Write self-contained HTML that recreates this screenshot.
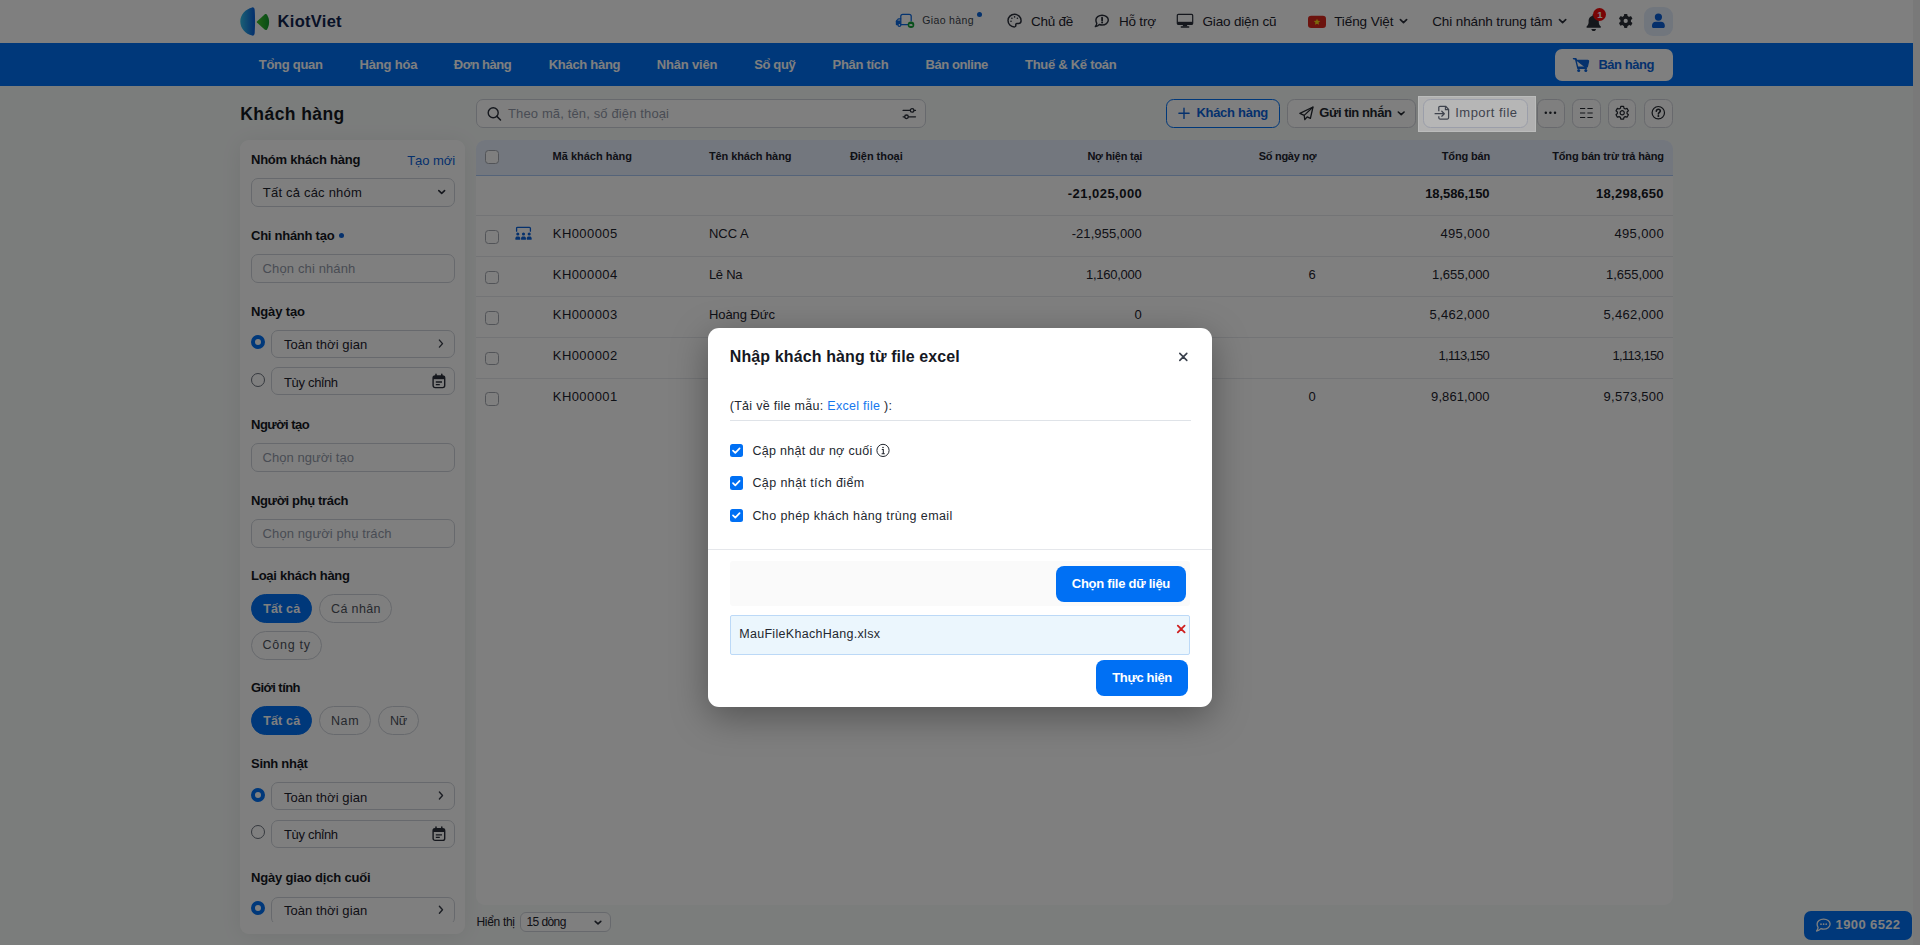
<!DOCTYPE html>
<html lang="vi"><head><meta charset="utf-8"><title>Khách hàng - KiotViet</title>
<style>

*{box-sizing:border-box}
html,body{margin:0;padding:0}
body{width:1920px;height:945px;overflow:hidden;position:relative;background:#f7faf9;font-family:"Liberation Sans",sans-serif;color:#1d222d;font-size:13px}
.t{position:absolute;white-space:pre;display:block}
.a{position:absolute}
.box{position:absolute;border:1px solid #cfd3da;border-radius:7px;background:#fff}
svg{position:absolute;overflow:visible}
.cb{position:absolute;width:13.5px;height:13.5px;border:1px solid #a4a8b0;border-radius:3.5px;background:#fff}
.row{position:absolute;left:476px;width:1197px;height:1px;background:#e6e8ec}
.pill{position:absolute;height:29px;border-radius:15px;border:1px solid #cfd3da;background:#fff}
.pill.on{background:#0070f4;border-color:#0070f4}
.radio{position:absolute;width:14.2px;height:14.2px;border-radius:50%;border:1px solid #6b717c;background:#fff}
.radio.on{border:4px solid #0070f4}
.ibtn{position:absolute;top:99px;height:28.5px;border:1px solid #d0d3da;border-radius:7.5px;background:#fff}

</style></head>
<body>
<div class="a" style="left:0px;top:0px;width:1913px;height:43px;background:#fff"></div>
<svg style="left:240px;top:7px;" width="31" height="30" viewBox="0 0 31 30"><g transform="translate(0.000 0.000) scale(1.0000 1.0000)"><defs><linearGradient id="lg1" x1="0" x2="1" y1="0" y2="0"><stop offset="0" stop-color="#35c0ea"/><stop offset="0.9" stop-color="#0c66dc"/></linearGradient><linearGradient id="lg2" x1="0" x2="1" y1="0" y2="0"><stop offset="0" stop-color="#43c52c"/><stop offset="1" stop-color="#0f9a2e"/></linearGradient></defs><path d="M12.2 0.4 C13.6 0.2 14.6 1.2 14.7 3 C15.2 9 15.2 20 14.7 26 C14.6 27.8 13.6 28.8 12.2 28.6 C5.5 27 0.3 21.5 0.3 14.5 C0.3 7.5 5.5 2 12.2 0.4Z" fill="url(#lg1)"/><path d="M16.9 14.6 C16.6 14.9 16.6 15.3 16.9 15.6 L24.6 22.6 C25.5 23.4 26.6 23.2 27.2 22.2 C28.4 20 29.1 17.6 29.1 15 C29.1 12.4 28.4 10 27.2 7.9 C26.6 6.9 25.5 6.7 24.6 7.5Z" fill="url(#lg2)"/></g></svg>
<span class="t" style="top:13px;font-size:16.5px;line-height:16.5px;color:#10244f;font-weight:700;letter-spacing:0.279px;left:277.60px;">KiotViet</span>
<svg style="left:895px;top:13px;" width="21" height="17" viewBox="0 0 21 17"><g transform="translate(0.500 0.000) scale(1.0000 1.0000)"><path d="M5.3 11.9V3.2C5.3 2.1 6.2 1.3 7.3 1.3H13.7C14.8 1.3 15.7 2.1 15.7 3.2V7.8M5.3 11.7H12.2" fill="none" stroke="#0b68e0" stroke-width="1.25" stroke-linecap="round"/><path d="M5.2 5.8H3.2C2.8 5.8 2.5 6 2.3 6.3L0.9 8.2" fill="none" stroke="#0b68e0" stroke-width="1.2" stroke-linecap="round" stroke-linejoin="round"/><path d="M0.3 8.4C0.3 7.9 0.6 7.5 1.1 7.5H5.1V12.3H1.3C0.7 12.3 0.3 11.9 0.3 11.3Z" fill="#0b68e0"/><circle cx="3.9" cy="11.9" r="2" fill="#0b68e0"/><circle cx="3.9" cy="11.9" r="0.8" fill="#fff"/><circle cx="15.5" cy="11.8" r="3.3" fill="#12a037"/><path d="M13.9 10.9h3.3l-0.8 1.1h0.6v0.9h-3.1z" fill="#e8f5ea"/></g></svg>
<span class="t" style="top:15px;font-size:10.5px;line-height:10.5px;color:#3a3f4a;letter-spacing:0.366px;left:922.20px;">Giao hàng</span>
<div class="a" style="left:976.8px;top:12.1px;width:5.4px;height:5.4px;border-radius:50%;background:#0a64d8"></div>
<svg style="left:1007px;top:13px;" width="16" height="16" viewBox="0 0 16 16"><g transform="translate(0.300 0.600) scale(1.0000 1.0000)"><path d="M7.2 0.7C3.6 0.7 0.7 3.5 0.7 7C0.7 10.5 3.5 13.3 7 13.3C8.1 13.3 8.7 12.5 8.5 11.6C8.3 10.8 8.6 9.9 9.6 9.9H11.3C12.8 9.9 13.8 8.8 13.8 7.2C13.8 3.4 10.8 0.7 7.2 0.7Z" fill="none" stroke="#2a2f3a" stroke-width="1.45"/><circle cx="3.7" cy="7.6" r="0.8" fill="#2a2f3a"/><circle cx="4.6" cy="4.6" r="0.8" fill="#2a2f3a"/><circle cx="7.3" cy="3.3" r="0.8" fill="#2a2f3a"/><circle cx="10.1" cy="4.6" r="0.8" fill="#2a2f3a"/></g></svg>
<span class="t" style="top:15px;font-size:13.5px;line-height:13.5px;color:#1d222d;letter-spacing:-0.269px;left:1031.00px;">Chủ đề</span>
<svg style="left:1094px;top:14px;" width="16" height="15" viewBox="0 0 16 15"><g transform="translate(0.500 0.500) scale(1.0000 1.0000)"><path d="M7.6 0.7C11 0.7 13.8 2.9 13.8 5.6C13.8 8.3 11 10.5 7.6 10.5C6.6 10.5 5.7 10.3 4.9 10C4 10.9 2.6 11.7 0.9 12C1.7 11 2.2 9.9 2.3 8.8C1.7 7.9 1.4 6.8 1.4 5.6C1.4 2.9 4.2 0.7 7.6 0.7Z" fill="none" stroke="#2a2f3a" stroke-width="1.45" stroke-linejoin="round"/><path d="M7.6 3.1v2.9" stroke="#2a2f3a" stroke-width="1.8" stroke-linecap="round"/><circle cx="7.6" cy="8.1" r="1" fill="#2a2f3a"/></g></svg>
<span class="t" style="top:15px;font-size:13.5px;line-height:13.5px;color:#1d222d;letter-spacing:-0.182px;left:1118.90px;">Hỗ trợ</span>
<svg style="left:1176px;top:13px;" width="19" height="16" viewBox="0 0 19 16"><g transform="translate(0.700 0.800) scale(1.0000 1.0000)"><rect x="0.6" y="0.6" width="15.4" height="9.9" rx="1" fill="none" stroke="#2a2f3a" stroke-width="1.2"/><rect x="0.7" y="8" width="15.2" height="2.5" fill="#2a2f3a"/><path d="M6.6 10.5h3.4l0.8 2.2H5.8z" fill="#2a2f3a"/><rect x="3.9" y="12.5" width="8.8" height="1.4" rx="0.6" fill="#2a2f3a"/></g></svg>
<span class="t" style="top:15px;font-size:13.5px;line-height:13.5px;color:#1d222d;letter-spacing:-0.165px;left:1202.50px;">Giao diện cũ</span>
<svg style="left:1308px;top:15px;" width="19" height="14" viewBox="0 0 19 14"><g transform="translate(0.000 0.800) scale(1.0000 1.0000)"><rect width="18" height="12.2" rx="3.2" fill="#d8261c"/><path d="M9 2.9l0.95 2.1 2.3 0.25-1.7 1.55 0.45 2.25L9 7.9 6.95 9.05l0.5-2.25L5.75 5.25l2.3-0.25z" fill="#f7d417"/></g></svg>
<span class="t" style="top:15px;font-size:13.5px;line-height:13.5px;color:#1d222d;letter-spacing:-0.083px;left:1334.20px;">Tiếng Việt</span>
<svg style="left:1400px;top:19px;" width="8" height="6" viewBox="0 0 8 6"><g transform="translate(0.000 0.300) scale(1.0000 1.0000)"><path d="M0.4 0.4 L3.5 3.3 L6.6 0.4" fill="none" stroke="#2a2f3a" stroke-width="1.7" stroke-linecap="round" stroke-linejoin="round"/></g></svg>
<span class="t" style="top:15px;font-size:13.5px;line-height:13.5px;color:#1d222d;letter-spacing:-0.113px;left:1432.20px;">Chi nhánh trung tâm</span>
<svg style="left:1559px;top:19px;" width="9" height="6" viewBox="0 0 9 6"><g transform="translate(0.100 0.300) scale(1.0000 1.0000)"><path d="M0.4 0.4 L3.5 3.3 L6.6 0.4" fill="none" stroke="#2a2f3a" stroke-width="1.7" stroke-linecap="round" stroke-linejoin="round"/></g></svg>
<svg style="left:1586px;top:13px;" width="17" height="19" viewBox="0 0 17 19"><g transform="translate(0.000 0.600) scale(1.0000 1.0000)"><path d="M7.7 0.5C8.4 0.5 8.9 1 8.9 1.7V2.1C11.2 2.6 12.8 4.6 12.8 7V8.6C12.8 10.4 13.5 11.6 14.6 12.6C15.2 13.2 14.9 14.2 14 14.2H1.4C0.5 14.2 0.2 13.2 0.8 12.6C1.9 11.6 2.6 10.4 2.6 8.6V7C2.6 4.6 4.2 2.6 6.5 2.1V1.7C6.5 1 7 0.5 7.7 0.5Z" fill="#2a2e36"/><path d="M5.4 15.3h4.6c0 1.2-1 2.1-2.3 2.1s-2.3-0.9-2.3-2.1z" fill="#2a2e36"/></g></svg>
<div class="a" style="left:1592.9px;top:8.3px;width:13.2px;height:13.2px;border-radius:50%;background:#f30a0a"></div>
<span class="t" style="top:10px;font-size:9.5px;line-height:9.5px;color:#fff;font-weight:700;left:1597.20px;">1</span>
<svg style="left:1618px;top:13px;" width="16" height="16" viewBox="0 0 16 16"><g transform="translate(7.700 7.900) scale(1.0000 1.0000)"><g fill="#2a2e36"><rect x="-1.75" y="-7" width="3.5" height="4" rx="0.8" transform="rotate(0)"/><rect x="-1.75" y="-7" width="3.5" height="4" rx="0.8" transform="rotate(60)"/><rect x="-1.75" y="-7" width="3.5" height="4" rx="0.8" transform="rotate(120)"/><rect x="-1.75" y="-7" width="3.5" height="4" rx="0.8" transform="rotate(180)"/><rect x="-1.75" y="-7" width="3.5" height="4" rx="0.8" transform="rotate(240)"/><rect x="-1.75" y="-7" width="3.5" height="4" rx="0.8" transform="rotate(300)"/><circle r="5.3"/></g><circle r="2.1" fill="#fff"/></g></svg>
<div class="a" style="left:1644px;top:6.8px;width:28.8px;height:28.8px;border-radius:9px;background:#e3ecfb"></div>
<svg style="left:1651px;top:13px;" width="15" height="16" viewBox="0 0 15 16"><g transform="translate(0.800 0.400) scale(1.0000 1.0000)"><circle cx="6.6" cy="3.7" r="3.6" fill="#0a5fd6"/><path d="M0.2 12.2C0.2 9.8 1.8 8.4 4 8.4H9.2C11.4 8.4 13 9.8 13 12.2V13C13 13.9 12.4 14.5 11.5 14.5H1.7C0.8 14.5 0.2 13.9 0.2 13Z" fill="#0a5fd6"/></g></svg>
<div class="a" style="left:0px;top:43px;width:1913px;height:43px;background:#0070f4"></div>
<span class="t" style="top:58px;font-size:13px;line-height:13px;color:#fff;font-weight:700;letter-spacing:-0.273px;left:258.75px;">Tổng quan</span>
<span class="t" style="top:58px;font-size:13px;line-height:13px;color:#fff;font-weight:700;letter-spacing:-0.176px;left:359.50px;">Hàng hóa</span>
<span class="t" style="top:58px;font-size:13px;line-height:13px;color:#fff;font-weight:700;letter-spacing:-0.464px;left:453.75px;">Đơn hàng</span>
<span class="t" style="top:58px;font-size:13px;line-height:13px;color:#fff;font-weight:700;letter-spacing:-0.295px;left:548.75px;">Khách hàng</span>
<span class="t" style="top:58px;font-size:13px;line-height:13px;color:#fff;font-weight:700;letter-spacing:-0.172px;left:656.75px;">Nhân viên</span>
<span class="t" style="top:58px;font-size:13px;line-height:13px;color:#fff;font-weight:700;letter-spacing:-0.369px;left:754.25px;">Sổ quỹ</span>
<span class="t" style="top:58px;font-size:13px;line-height:13px;color:#fff;font-weight:700;letter-spacing:-0.283px;left:832.50px;">Phân tích</span>
<span class="t" style="top:58px;font-size:13px;line-height:13px;color:#fff;font-weight:700;letter-spacing:-0.411px;left:925.50px;">Bán online</span>
<span class="t" style="top:58px;font-size:13px;line-height:13px;color:#fff;font-weight:700;letter-spacing:-0.276px;left:1025.00px;">Thuế &amp; Kế toán</span>
<div class="a" style="left:1555px;top:49px;width:118px;height:32px;border-radius:7px;background:#fff"></div>
<svg style="left:1572px;top:57px;" width="18" height="16" viewBox="0 0 18 16"><g transform="translate(0.800 0.800) scale(1.0000 1.0000)"><path d="M0.7 0.8H2.6C3 0.8 3.3 1 3.4 1.4L3.7 2.6H15C15.5 2.6 15.8 3 15.7 3.5L14.6 8.6C14.5 9.1 14.1 9.4 13.6 9.4H5.2L5.5 10.6H13.6" fill="#0a62da" stroke="#0a62da" stroke-width="1.3" stroke-linejoin="round" stroke-linecap="round"/><path d="M0.7 0.8H2.7L5 10.4" fill="none" stroke="#0a62da" stroke-width="1.4" stroke-linecap="round" stroke-linejoin="round"/><circle cx="5.9" cy="12.6" r="1.5" fill="#0a62da"/><circle cx="13" cy="12.6" r="1.5" fill="#0a62da"/></g></svg>
<span class="t" style="top:58px;font-size:13px;line-height:13px;color:#0a62da;font-weight:700;letter-spacing:-0.462px;left:1598.40px;">Bán hàng</span>
<span class="t" style="top:106px;font-size:17.5px;line-height:17.5px;color:#15181f;font-weight:700;letter-spacing:0.427px;left:240.30px;">Khách hàng</span>
<div class="box" style="left:476px;top:99px;width:450px;height:28.5px;"></div>
<svg style="left:487px;top:106px;" width="16" height="16" viewBox="0 0 16 16"><g transform="translate(0.300 0.800) scale(1.0000 1.0000)"><circle cx="5.9" cy="5.9" r="5" fill="none" stroke="#2a2f3a" stroke-width="1.4"/><path d="M9.6 9.6L13.2 13.2" stroke="#2a2f3a" stroke-width="1.5" stroke-linecap="round"/></g></svg>
<span class="t" style="top:107px;font-size:13px;line-height:13px;color:#9299a8;letter-spacing:0.133px;left:508.00px;">Theo mã, tên, số điện thoại</span>
<svg style="left:902px;top:107px;" width="16" height="14" viewBox="0 0 16 14"><g transform="translate(0.500 0.300) scale(1.0000 1.0000)"><path d="M0.6 3.1H13M0.6 9.5H13" stroke="#2a2f3a" stroke-width="1.3" stroke-linecap="round"/><circle cx="9.6" cy="3.1" r="1.8" fill="#fff" stroke="#2a2f3a" stroke-width="1.3"/><circle cx="4" cy="9.5" r="1.8" fill="#fff" stroke="#2a2f3a" stroke-width="1.3"/></g></svg>
<div class="a" style="left:1166px;top:99px;width:114px;height:28.5px;border:1px solid #0070f4;border-radius:7.5px;background:#fff"></div>
<svg style="left:1178px;top:107px;" width="13" height="13" viewBox="0 0 13 13"><g transform="translate(0.300 0.600) scale(1.0000 1.0000)"><path d="M5.7 0.6V10.8M0.6 5.7H10.8" stroke="#0a62da" stroke-width="1.4" stroke-linecap="round"/></g></svg>
<span class="t" style="top:106px;font-size:13px;line-height:13px;color:#0a62da;font-weight:700;letter-spacing:-0.278px;left:1196.40px;">Khách hàng</span>
<div class="ibtn" style="left:1287.2px;top:99px;width:128.4px;height:28.5px;"></div>
<svg style="left:1299px;top:106px;" width="16" height="16" viewBox="0 0 16 16"><g transform="translate(0.000 0.200) scale(1.0000 1.0000)"><path d="M14 0.8L0.9 7.2L5.2 9.2L5.8 13.4L8.2 10.6L11.4 12.2Z" fill="none" stroke="#23272f" stroke-width="1.3" stroke-linejoin="round"/><path d="M14 0.8L5.2 9.2" stroke="#23272f" stroke-width="1.2"/></g></svg>
<span class="t" style="top:106px;font-size:13px;line-height:13px;color:#23272f;font-weight:700;letter-spacing:-0.418px;left:1319.20px;">Gửi tin nhắn</span>
<svg style="left:1397px;top:111px;" width="9" height="6" viewBox="0 0 9 6"><g transform="translate(0.900 0.600) scale(1.0000 1.0000)"><path d="M0.4 0.4 L3.3 3.1 L6.199999999999999 0.4" fill="none" stroke="#23272f" stroke-width="1.6" stroke-linecap="round" stroke-linejoin="round"/></g></svg>
<div class="ibtn" style="left:1536.5px;top:99px;width:28px;height:28.5px;"></div>
<div class="ibtn" style="left:1572.3px;top:99px;width:28.3px;height:28.5px;"></div>
<div class="ibtn" style="left:1608.4px;top:99px;width:28px;height:28.5px;"></div>
<div class="ibtn" style="left:1644.3px;top:99px;width:28.3px;height:28.5px;"></div>
<svg style="left:1544px;top:111px;" width="14" height="5" viewBox="0 0 14 5"><g transform="translate(0.400 0.200) scale(1.0000 1.0000)"><circle cx="1.4" cy="1.5" r="1.25" fill="#23272f"/><circle cx="6" cy="1.5" r="1.25" fill="#23272f"/><circle cx="10.6" cy="1.5" r="1.25" fill="#23272f"/></g></svg>
<svg style="left:1580px;top:107px;" width="14" height="13" viewBox="0 0 14 13"><g transform="translate(0.000 0.500) scale(1.0000 1.0000)"><path d="M0 1H5.2M7.4 1H12.7M0 5.5H5.2M7.4 5.5H12.7M0 10H5.2M7.4 10H12.7" stroke="#23272f" stroke-width="1.1"/></g></svg>
<svg style="left:1615px;top:105px;" width="16" height="16" viewBox="0 0 16 16"><g transform="translate(7.200 7.800) scale(1.0000 1.0000)"><path d="M-1.76 -4.57 L-1.41 -6.35 L1.41 -6.35 L1.76 -4.57 L3.08 -3.81 L4.79 -4.39 L6.20 -1.95 L4.84 -0.77 L4.84 0.77 L6.20 1.95 L4.79 4.39 L3.08 3.81 L1.76 4.57 L1.41 6.35 L-1.41 6.35 L-1.76 4.57 L-3.08 3.81 L-4.79 4.39 L-6.20 1.95 L-4.84 0.77 L-4.84 -0.77 L-6.20 -1.95 L-4.79 -4.39 L-3.08 -3.81Z" fill="none" stroke="#23272f" stroke-width="1.2" stroke-linejoin="round"/><circle r="2.1" fill="none" stroke="#23272f" stroke-width="1.2"/></g></svg>
<svg style="left:1651px;top:106px;" width="15" height="15" viewBox="0 0 15 15"><g transform="translate(0.600 0.000) scale(1.0000 1.0000)"><circle cx="6.7" cy="6.7" r="6.2" fill="none" stroke="#23272f" stroke-width="1.2"/><path d="M4.7 5.2C4.7 4 5.6 3.3 6.7 3.3C7.8 3.3 8.7 4 8.7 5.1C8.7 6.4 6.9 6.5 6.8 8" fill="none" stroke="#23272f" stroke-width="1.6" stroke-linecap="round"/><circle cx="6.8" cy="10.1" r="1" fill="#23272f"/></g></svg>
<div class="a" style="left:240px;top:140px;width:225px;height:794px;border-radius:9px;box-shadow:0 2px 22px rgba(0,0,0,.07)"></div><div class="a" style="left:240px;top:140px;width:225px;height:794px;background:#fff;border-radius:9px;overflow:hidden"><div class="a" style="left:-240px;top:-140px;width:1920px;height:922.3px;overflow:hidden">
<span class="t" style="top:153px;font-size:13px;line-height:13px;color:#15181f;font-weight:700;letter-spacing:-0.228px;left:251.00px;">Nhóm khách hàng</span>
<span class="t" style="top:154px;font-size:13px;line-height:13px;color:#0a62da;letter-spacing:-0.044px;left:407.20px;">Tạo mới</span>
<div class="box" style="left:251px;top:178.4px;width:204px;height:28.2px;"></div>
<span class="t" style="top:186px;font-size:13px;line-height:13px;color:#1d222d;letter-spacing:0.206px;left:262.80px;">Tất cả các nhóm</span>
<svg style="left:438px;top:190px;" width="8" height="5" viewBox="0 0 8 5"><g transform="translate(0.400 0.200) scale(1.0000 1.0000)"><path d="M0.4 0.4 L3.3 3.1 L6.199999999999999 0.4" fill="none" stroke="#2a2f3a" stroke-width="1.6" stroke-linecap="round" stroke-linejoin="round"/></g></svg>
<span class="t" style="top:229px;font-size:13px;line-height:13px;color:#15181f;font-weight:700;letter-spacing:-0.256px;left:251.00px;">Chi nhánh tạo</span>
<div class="a" style="left:338.8px;top:233.1px;width:5.2px;height:5.2px;border-radius:50%;background:#0a62da"></div>
<div class="box" style="left:251px;top:254.4px;width:204px;height:28.2px;"></div>
<span class="t" style="top:262px;font-size:13px;line-height:13px;color:#9299a8;letter-spacing:0.125px;left:262.60px;">Chọn chi nhánh</span>
<span class="t" style="top:305px;font-size:13px;line-height:13px;color:#15181f;font-weight:700;letter-spacing:-0.129px;left:251.00px;">Ngày tạo</span>
<div class="radio on" style="left:250.9px;top:334.9px"></div>
<div class="box" style="left:271.4px;top:330.4px;width:183.6px;height:28.1px;"></div>
<span class="t" style="top:338px;font-size:13px;line-height:13px;color:#1d222d;letter-spacing:0.081px;left:283.90px;">Toàn thời gian</span>
<svg style="left:438px;top:339px;" width="7" height="10" viewBox="0 0 7 10"><g transform="translate(0.900 0.600) scale(1.0000 1.0000)"><path d="M0.5 0.5 L3.6 4.0 L0.5 7.5" fill="none" stroke="#3a3f4a" stroke-width="1.4" stroke-linecap="round" stroke-linejoin="round"/></g></svg>
<div class="radio" style="left:250.9px;top:372.9px"></div>
<div class="box" style="left:271.4px;top:367.4px;width:183.6px;height:28.1px;"></div>
<span class="t" style="top:376px;font-size:13px;line-height:13px;color:#1d222d;letter-spacing:-0.272px;left:283.90px;">Tùy chỉnh</span>
<svg style="left:432px;top:373px;" width="15" height="17" viewBox="0 0 15 17"><g transform="translate(0.400 0.800) scale(1.0000 1.0000)"><rect x="0.7" y="2.2" width="11.6" height="11.6" rx="2" fill="none" stroke="#2a2f3a" stroke-width="1.4"/><rect x="0.7" y="2.2" width="11.6" height="3.2" fill="#2a2f3a"/><path d="M3.6 0.5v3M9.4 0.5v3" stroke="#2a2f3a" stroke-width="1.5" stroke-linecap="round"/><path d="M3.4 8.2h6.2M3.4 10.8h4" stroke="#2a2f3a" stroke-width="1.3"/></g></svg>
<span class="t" style="top:418px;font-size:13px;line-height:13px;color:#15181f;font-weight:700;letter-spacing:-0.502px;left:251.00px;">Người tạo</span>
<div class="box" style="left:251px;top:443.4px;width:204px;height:28.2px;"></div>
<span class="t" style="top:451px;font-size:13px;line-height:13px;color:#9299a8;letter-spacing:0.027px;left:262.60px;">Chọn người tạo</span>
<span class="t" style="top:494px;font-size:13px;line-height:13px;color:#15181f;font-weight:700;letter-spacing:-0.353px;left:251.00px;">Người phụ trách</span>
<div class="box" style="left:251px;top:519.4px;width:204px;height:28.2px;"></div>
<span class="t" style="top:527px;font-size:13px;line-height:13px;color:#9299a8;letter-spacing:0.095px;left:262.60px;">Chọn người phụ trách</span>
<span class="t" style="top:569px;font-size:13px;line-height:13px;color:#15181f;font-weight:700;letter-spacing:-0.256px;left:251.00px;">Loại khách hàng</span>
<div class="pill on" style="left:250.7px;top:594.2px;width:61.3px"></div>
<span class="t" style="top:603px;font-size:12.5px;line-height:12.5px;color:#fff;font-weight:700;letter-spacing:0.172px;left:263.20px;">Tất cả</span>
<div class="pill" style="left:319.2px;top:594.2px;width:72.6px"></div>
<span class="t" style="top:603px;font-size:12.5px;line-height:12.5px;color:#4d525c;letter-spacing:0.372px;left:331.00px;">Cá nhân</span>
<div class="pill" style="left:250.7px;top:631.2px;width:71.2px"></div>
<span class="t" style="top:639px;font-size:12.5px;line-height:12.5px;color:#4d525c;letter-spacing:0.718px;left:262.60px;">Công ty</span>
<span class="t" style="top:681px;font-size:13px;line-height:13px;color:#15181f;font-weight:700;letter-spacing:-0.564px;left:251.00px;">Giới tính</span>
<div class="pill on" style="left:250.7px;top:706.2px;width:61.3px"></div>
<span class="t" style="top:715px;font-size:12.5px;line-height:12.5px;color:#fff;font-weight:700;letter-spacing:0.172px;left:263.20px;">Tất cả</span>
<div class="pill" style="left:319.2px;top:706.2px;width:51.8px"></div>
<span class="t" style="top:715px;font-size:12.5px;line-height:12.5px;color:#4d525c;letter-spacing:0.597px;left:331.00px;">Nam</span>
<div class="pill" style="left:378.1px;top:706.2px;width:40.6px"></div>
<span class="t" style="top:715px;font-size:12.5px;line-height:12.5px;color:#4d525c;letter-spacing:-0.206px;left:390.00px;">Nữ</span>
<span class="t" style="top:757px;font-size:13px;line-height:13px;color:#15181f;font-weight:700;letter-spacing:-0.290px;left:251.00px;">Sinh nhật</span>
<div class="radio on" style="left:250.9px;top:788.3px"></div>
<div class="box" style="left:271.4px;top:782.3px;width:183.6px;height:28.1px;"></div>
<span class="t" style="top:791px;font-size:13px;line-height:13px;color:#1d222d;letter-spacing:0.081px;left:283.90px;">Toàn thời gian</span>
<svg style="left:438px;top:791px;" width="7" height="10" viewBox="0 0 7 10"><g transform="translate(0.900 0.500) scale(1.0000 1.0000)"><path d="M0.5 0.5 L3.6 4.0 L0.5 7.5" fill="none" stroke="#3a3f4a" stroke-width="1.4" stroke-linecap="round" stroke-linejoin="round"/></g></svg>
<div class="radio" style="left:250.9px;top:825.3px"></div>
<div class="box" style="left:271.4px;top:820.2px;width:183.6px;height:28.1px;"></div>
<span class="t" style="top:828px;font-size:13px;line-height:13px;color:#1d222d;letter-spacing:-0.272px;left:283.90px;">Tùy chỉnh</span>
<svg style="left:432px;top:826px;" width="15" height="17" viewBox="0 0 15 17"><g transform="translate(0.400 0.600) scale(1.0000 1.0000)"><rect x="0.7" y="2.2" width="11.6" height="11.6" rx="2" fill="none" stroke="#2a2f3a" stroke-width="1.4"/><rect x="0.7" y="2.2" width="11.6" height="3.2" fill="#2a2f3a"/><path d="M3.6 0.5v3M9.4 0.5v3" stroke="#2a2f3a" stroke-width="1.5" stroke-linecap="round"/><path d="M3.4 8.2h6.2M3.4 10.8h4" stroke="#2a2f3a" stroke-width="1.3"/></g></svg>
<span class="t" style="top:871px;font-size:13px;line-height:13px;color:#15181f;font-weight:700;letter-spacing:-0.172px;left:251.00px;">Ngày giao dịch cuối</span>
<div class="radio on" style="left:250.9px;top:901.1px"></div>
<div class="box" style="left:271.4px;top:896.6px;width:183.6px;height:28.1px;"></div>
<span class="t" style="top:904px;font-size:13px;line-height:13px;color:#1d222d;letter-spacing:0.081px;left:283.90px;">Toàn thời gian</span>
<svg style="left:438px;top:905px;" width="7" height="10" viewBox="0 0 7 10"><g transform="translate(0.900 0.800) scale(1.0000 1.0000)"><path d="M0.5 0.5 L3.6 4.0 L0.5 7.5" fill="none" stroke="#3a3f4a" stroke-width="1.4" stroke-linecap="round" stroke-linejoin="round"/></g></svg>
</div></div>
<div class="a" style="left:476px;top:140px;width:1197px;height:765px;background:#fff;border-radius:9px"></div>
<div class="a" style="left:476px;top:140px;width:1197px;height:36px;background:#e6effd;border-radius:9px 9px 0 0;border-bottom:1px solid #a9c6f3"></div>
<div class="cb" style="left:485px;top:150.2px"></div>
<span class="t" style="top:151px;font-size:11px;line-height:11px;color:#1d222d;font-weight:700;letter-spacing:-0.006px;left:552.60px;">Mã khách hàng</span>
<span class="t" style="top:151px;font-size:11px;line-height:11px;color:#1d222d;font-weight:700;letter-spacing:-0.088px;left:708.90px;">Tên khách hàng</span>
<span class="t" style="top:151px;font-size:11px;line-height:11px;color:#1d222d;font-weight:700;letter-spacing:-0.041px;left:849.90px;">Điện thoại</span>
<span class="t" style="top:151px;font-size:11px;line-height:11px;color:#1d222d;font-weight:700;letter-spacing:-0.233px;right:777.83px;">Nợ hiện tại</span>
<span class="t" style="top:151px;font-size:11px;line-height:11px;color:#1d222d;font-weight:700;letter-spacing:-0.288px;right:603.79px;">Số ngày nợ</span>
<span class="t" style="top:151px;font-size:11px;line-height:11px;color:#1d222d;font-weight:700;letter-spacing:-0.129px;right:429.83px;">Tổng bán</span>
<span class="t" style="top:151px;font-size:11px;line-height:11px;color:#1d222d;font-weight:700;letter-spacing:-0.155px;right:256.16px;">Tổng bán trừ trả hàng</span>
<span class="t" style="top:187px;font-size:13px;line-height:13px;color:#15181f;font-weight:700;letter-spacing:0.459px;right:777.74px;">-21,025,000</span>
<span class="t" style="top:187px;font-size:13px;line-height:13px;color:#15181f;font-weight:700;letter-spacing:-0.075px;right:430.48px;">18,586,150</span>
<span class="t" style="top:187px;font-size:13px;line-height:13px;color:#15181f;font-weight:700;letter-spacing:0.269px;right:256.13px;">18,298,650</span>
<div class="row" style="top:215.4px"></div>
<div class="row" style="top:256.4px"></div>
<div class="row" style="top:296.3px"></div>
<div class="row" style="top:337px"></div>
<div class="row" style="top:378.1px"></div>
<div class="cb" style="left:485px;top:230.2px"></div>
<span class="t" style="top:227px;font-size:13px;line-height:13px;color:#1d222d;letter-spacing:0.421px;left:552.80px;">KH000005</span>
<span class="t" style="top:227px;font-size:13px;line-height:13px;color:#1d222d;letter-spacing:-0.009px;left:708.90px;">NCC A</span>
<span class="t" style="top:227px;font-size:13px;line-height:13px;color:#1d222d;letter-spacing:0.079px;right:778.12px;">-21,955,000</span>
<span class="t" style="top:227px;font-size:13px;line-height:13px;color:#1d222d;letter-spacing:0.367px;right:430.03px;">495,000</span>
<span class="t" style="top:227px;font-size:13px;line-height:13px;color:#1d222d;letter-spacing:0.367px;right:256.03px;">495,000</span>
<div class="cb" style="left:485px;top:270.6px"></div>
<span class="t" style="top:268px;font-size:13px;line-height:13px;color:#1d222d;letter-spacing:0.421px;left:552.80px;">KH000004</span>
<span class="t" style="top:268px;font-size:13px;line-height:13px;color:#1d222d;letter-spacing:-0.251px;left:708.90px;">Lê Na</span>
<span class="t" style="top:268px;font-size:13px;line-height:13px;color:#1d222d;letter-spacing:-0.243px;right:778.44px;">1,160,000</span>
<span class="t" style="top:268px;font-size:13px;line-height:13px;color:#1d222d;right:604.40px;">6</span>
<span class="t" style="top:268px;font-size:13px;line-height:13px;color:#1d222d;letter-spacing:-0.043px;right:430.44px;">1,655,000</span>
<span class="t" style="top:268px;font-size:13px;line-height:13px;color:#1d222d;letter-spacing:-0.043px;right:256.44px;">1,655,000</span>
<div class="cb" style="left:485px;top:311.3px"></div>
<span class="t" style="top:308px;font-size:13px;line-height:13px;color:#1d222d;letter-spacing:0.421px;left:552.80px;">KH000003</span>
<span class="t" style="top:308px;font-size:13px;line-height:13px;color:#1d222d;letter-spacing:-0.064px;left:708.90px;">Hoàng Đức</span>
<span class="t" style="top:308px;font-size:13px;line-height:13px;color:#1d222d;right:778.20px;">0</span>
<span class="t" style="top:308px;font-size:13px;line-height:13px;color:#1d222d;letter-spacing:0.270px;right:430.13px;">5,462,000</span>
<span class="t" style="top:308px;font-size:13px;line-height:13px;color:#1d222d;letter-spacing:0.270px;right:256.13px;">5,462,000</span>
<div class="cb" style="left:485px;top:351.7px"></div>
<span class="t" style="top:349px;font-size:13px;line-height:13px;color:#1d222d;letter-spacing:0.421px;left:552.80px;">KH000002</span>
<span class="t" style="top:349px;font-size:13px;line-height:13px;color:#1d222d;letter-spacing:-0.734px;right:431.13px;">1,113,150</span>
<span class="t" style="top:349px;font-size:13px;line-height:13px;color:#1d222d;letter-spacing:-0.734px;right:257.13px;">1,113,150</span>
<div class="cb" style="left:485px;top:392.3px"></div>
<span class="t" style="top:390px;font-size:13px;line-height:13px;color:#1d222d;letter-spacing:0.421px;left:552.80px;">KH000001</span>
<span class="t" style="top:390px;font-size:13px;line-height:13px;color:#1d222d;right:604.40px;">0</span>
<span class="t" style="top:390px;font-size:13px;line-height:13px;color:#1d222d;letter-spacing:0.082px;right:430.32px;">9,861,000</span>
<span class="t" style="top:390px;font-size:13px;line-height:13px;color:#1d222d;letter-spacing:0.270px;right:256.13px;">9,573,500</span>
<svg style="left:515px;top:226px;" width="18" height="15" viewBox="0 0 18 15"><g transform="translate(0.000 0.600) scale(1.0000 1.0000)"><path d="M1.6 4.6V1.6C1.6 1 2 0.7 2.6 0.7H14.4C15 0.7 15.4 1 15.4 1.6V4.6" fill="none" stroke="#0a62da" stroke-width="1.3" stroke-linecap="round"/><circle cx="2.8" cy="7.4" r="1.55" fill="#0a62da"/><path d="M0.3999999999999999 13.2V11.6C0.3999999999999999 10.4 1.1999999999999997 9.8 2.1999999999999997 9.8H3.4C4.4 9.8 5.199999999999999 10.4 5.199999999999999 11.6V13.2Z" fill="#0a62da"/><circle cx="8.5" cy="7.4" r="1.55" fill="#0a62da"/><path d="M6.1 13.2V11.6C6.1 10.4 6.9 9.8 7.9 9.8H9.1C10.1 9.8 10.9 10.4 10.9 11.6V13.2Z" fill="#0a62da"/><circle cx="14.2" cy="7.4" r="1.55" fill="#0a62da"/><path d="M11.799999999999999 13.2V11.6C11.799999999999999 10.4 12.6 9.8 13.6 9.8H14.799999999999999C15.799999999999999 9.8 16.599999999999998 10.4 16.599999999999998 11.6V13.2Z" fill="#0a62da"/></g></svg>
<span class="t" style="top:916px;font-size:12px;line-height:12px;color:#1d222d;letter-spacing:-0.312px;left:476.50px;">Hiển thị</span>
<div class="box" style="left:520.4px;top:912.4px;width:90.4px;height:20px;border-radius:6px"></div>
<span class="t" style="top:916px;font-size:12px;line-height:12px;color:#1d222d;letter-spacing:-0.565px;left:526.40px;">15 dòng</span>
<svg style="left:594px;top:920px;" width="9" height="6" viewBox="0 0 9 6"><g transform="translate(0.800 0.900) scale(1.0000 1.0000)"><path d="M0.4 0.4 L3.2 2.9 L6.0 0.4" fill="none" stroke="#2a2f3a" stroke-width="1.6" stroke-linecap="round" stroke-linejoin="round"/></g></svg>
<div class="a" style="left:1804px;top:911px;width:108.4px;height:29px;border-radius:7px;background:#0070f4"></div>
<svg style="left:1815px;top:918px;" width="17" height="15" viewBox="0 0 17 15"><g transform="translate(0.800 0.400) scale(1.0000 1.0000)"><path d="M7.8 0.7C11.4 0.7 14.3 2.9 14.3 5.7C14.3 8.5 11.4 10.7 7.8 10.7C6.8 10.7 5.9 10.5 5.1 10.2C4.1 11.2 2.6 12.3 0.8 12.6C1.7 11.5 2.2 10.3 2.3 9.1C1.7 8.1 1.3 7 1.3 5.7C1.3 2.9 4.2 0.7 7.8 0.7Z" fill="none" stroke="#fff" stroke-width="1.3" stroke-linejoin="round"/><circle cx="5.2" cy="5.8" r="0.85" fill="#fff"/><circle cx="7.8" cy="5.8" r="0.85" fill="#fff"/><circle cx="10.4" cy="5.8" r="0.85" fill="#fff"/></g></svg>
<span class="t" style="top:918px;font-size:13px;line-height:13px;color:#fff;font-weight:700;letter-spacing:0.381px;left:1835.60px;">1900 6522</span>
<div class="a" style="left:1913px;top:0px;width:7px;height:945px;background:#f3f3f3"></div>
<div class="a" style="left:0px;top:0px;width:1920px;height:945px;background:rgba(0,0,0,.5);z-index:10"></div>
<div class="a" style="left:1418px;top:96.2px;width:118px;height:35.8px;background:#b1b1b1;border:1px solid #bbbcbb;z-index:11"></div>
<div class="a" style="left:0;top:0;z-index:12">
<div class="a" style="left:1423.3px;top:99.1px;width:105px;height:28.5px;border:1px solid #9b9ea9;border-radius:7.5px;background:#b6b6b6"></div>
<svg style="left:1434px;top:105px;" width="17" height="16" viewBox="0 0 17 16"><g transform="translate(0.600 0.600) scale(1.0000 1.0000)"><path d="M4.2 5.6V1.9C4.2 1.2 4.7 0.7 5.4 0.7H11L14 3.8V12.2C14 12.9 13.5 13.4 12.8 13.4H5.4C4.7 13.4 4.2 12.9 4.2 12.2V10.6" fill="none" stroke="#3f434d" stroke-width="1.25" stroke-linejoin="round"/><path d="M10.8 0.9V4H13.8" fill="none" stroke="#3f434d" stroke-width="1.1"/><path d="M0.5 8.1H9.6M7.2 5.6L9.7 8.1L7.2 10.6" fill="none" stroke="#3f434d" stroke-width="1.25" stroke-linecap="round" stroke-linejoin="round"/></g></svg>
<span class="t" style="top:106px;font-size:13px;line-height:13px;color:#3f434d;letter-spacing:0.462px;left:1455.30px;">Import file</span>
</div>
<div class="a" style="left:708px;top:328px;width:504px;height:379px;background:#fff;border-radius:11px;z-index:20;box-shadow:0 10px 36px rgba(0,0,0,.34)"></div>
<div class="a" style="left:0;top:0;z-index:21">
<span class="t" style="top:349px;font-size:16px;line-height:16px;color:#15181f;font-weight:700;letter-spacing:0.116px;left:729.80px;">Nhập khách hàng từ file excel</span>
<svg style="left:1178px;top:352px;" width="11" height="11" viewBox="0 0 11 11"><g transform="translate(0.800 0.400) scale(1.0000 1.0000)"><path d="M1 1L8 8M8 1L1 8" stroke="#39404c" stroke-width="1.6" stroke-linecap="round"/></g></svg>
<span class="t" style="top:400px;font-size:12.5px;line-height:12.5px;color:#23272f;letter-spacing:0.289px;left:729.70px;">(Tải về file mẫu: <span style="color:#1677ee">Excel file</span> ):</span>
<div class="a" style="left:730px;top:420px;width:461px;height:1px;background:#dfe3e8"></div>
<div class="a" style="left:729.6px;top:443.8px;width:13.2px;height:13.2px;background:#0070f4;border-radius:2.5px"></div>
<svg style="left:732px;top:447px;" width="10" height="8" viewBox="0 0 10 8"><g transform="translate(0.000 0.200) scale(1.0000 1.0000)"><path d="M1 3.4L3.3 5.6L7.6 1.1" fill="none" stroke="#fff" stroke-width="1.7" stroke-linecap="round" stroke-linejoin="round"/></g></svg>
<span class="t" style="top:445px;font-size:12.5px;line-height:12.5px;color:#23272f;letter-spacing:0.291px;left:752.40px;">Cập nhật dư nợ cuối</span>
<svg style="left:876px;top:443px;" width="15" height="16" viewBox="0 0 15 16"><g transform="translate(0.200 0.600) scale(1.0000 1.0000)"><circle cx="6.8" cy="6.8" r="6.1" fill="none" stroke="#23272f" stroke-width="1"/><path d="M5.6 5.9H7.1V10M5.4 10.1H8.6" fill="none" stroke="#23272f" stroke-width="1.1"/><circle cx="6.8" cy="3.9" r="0.8" fill="#23272f"/></g></svg>
<div class="a" style="left:729.6px;top:476.4px;width:13.2px;height:13.2px;background:#0070f4;border-radius:2.5px"></div>
<svg style="left:732px;top:479px;" width="10" height="9" viewBox="0 0 10 9"><g transform="translate(0.000 0.800) scale(1.0000 1.0000)"><path d="M1 3.4L3.3 5.6L7.6 1.1" fill="none" stroke="#fff" stroke-width="1.7" stroke-linecap="round" stroke-linejoin="round"/></g></svg>
<span class="t" style="top:477px;font-size:12.5px;line-height:12.5px;color:#23272f;letter-spacing:0.405px;left:752.40px;">Cập nhật tích điểm</span>
<div class="a" style="left:729.6px;top:508.6px;width:13.2px;height:13.2px;background:#0070f4;border-radius:2.5px"></div>
<svg style="left:732px;top:512px;" width="10" height="8" viewBox="0 0 10 8"><g transform="translate(0.000 0.000) scale(1.0000 1.0000)"><path d="M1 3.4L3.3 5.6L7.6 1.1" fill="none" stroke="#fff" stroke-width="1.7" stroke-linecap="round" stroke-linejoin="round"/></g></svg>
<span class="t" style="top:510px;font-size:12.5px;line-height:12.5px;color:#23272f;letter-spacing:0.409px;left:752.40px;">Cho phép khách hàng trùng email</span>
<div class="a" style="left:708px;top:549px;width:504px;height:1px;background:#e5e7eb"></div>
<div class="a" style="left:730px;top:561.2px;width:460px;height:45px;background:#fafafa;border-radius:3px"></div>
<div class="a" style="left:1056px;top:566.2px;width:130px;height:36px;background:#0070f4;border-radius:8px"></div>
<span class="t" style="top:577px;font-size:13px;line-height:13px;color:#fff;font-weight:700;letter-spacing:-0.255px;left:1071.80px;">Chọn file dữ liệu</span>
<div class="a" style="left:730px;top:615.3px;width:460px;height:39.5px;background:#ebf6fd;border:1px solid #bcd9f7;border-radius:2px"></div>
<span class="t" style="top:628px;font-size:12.5px;line-height:12.5px;color:#23272f;letter-spacing:0.300px;left:739.20px;">MauFileKhachHang.xlsx</span>
<svg style="left:1176px;top:624px;" width="11" height="11" viewBox="0 0 11 11"><g transform="translate(0.800 0.600) scale(1.0000 1.0000)"><path d="M1 1L7.8 7.8M7.8 1L1 7.8" stroke="#cf1f1f" stroke-width="1.8" stroke-linecap="round"/></g></svg>
<div class="a" style="left:1096px;top:660.3px;width:92px;height:36px;background:#0070f4;border-radius:8px"></div>
<span class="t" style="top:671px;font-size:13px;line-height:13px;color:#fff;font-weight:700;letter-spacing:-0.347px;left:1112.20px;">Thực hiện</span>
</div>
</body></html>
